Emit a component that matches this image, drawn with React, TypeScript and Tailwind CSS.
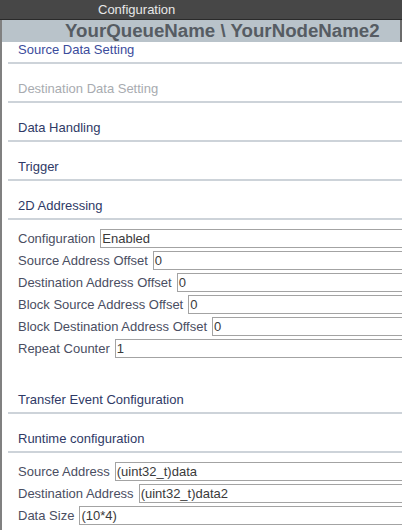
import React from 'react';

type Field = { label: string; value: string };

const addressing: Field[] = [
  { label: 'Configuration', value: 'Enabled' },
  { label: 'Source Address Offset', value: '0' },
  { label: 'Destination Address Offset', value: '0' },
  { label: 'Block Source Address Offset', value: '0' },
  { label: 'Block Destination Address Offset', value: '0' },
  { label: 'Repeat Counter', value: '1' },
];

const runtime: Field[] = [
  { label: 'Source Address', value: '(uint32_t)data' },
  { label: 'Destination Address', value: '(uint32_t)data2' },
  { label: 'Data Size', value: '(10*4)' },
];

function Section({
  title,
  tone = 'text-[#2f3a66]',
  first = false,
}: {
  title: string;
  tone?: string;
  first?: boolean;
}) {
  return (
    <div>
      <div className={`${first ? 'h-[20px]' : 'h-[37px]'} flex items-end pb-[5px] pl-[16px]`}>
        <span className={`text-[13px] leading-[15px] ${tone}`}>{title}</span>
      </div>
      <div className="ml-[6px] h-[2px] bg-[#cdd3d9]" />
    </div>
  );
}

function Fields({ items }: { items: Field[] }) {
  return (
    <div className="mt-[9px] flex w-[560px] flex-col gap-[3px] pl-[16px]">
      {items.map((f) => (
        <div key={f.label} className="flex items-center gap-[5px]">
          <span className="whitespace-nowrap text-[13px] leading-[15px] text-[#4a4e62]">{f.label}</span>
          <div className="flex h-[19px] flex-1 items-center border border-[#a3a3a3] bg-white px-[1px]">
            <span className="text-[13px] leading-[15px] text-[#3a3a3a]">{f.value}</span>
          </div>
        </div>
      ))}
    </div>
  );
}

export default function App() {
  return (
    <div
      className="h-[530px] w-[402px] overflow-hidden bg-white"
      style={{ fontFamily: '"Liberation Sans", Arial, sans-serif' }}
    >
      {/* Window title bar */}
      <div className="h-[20px] border-b border-[#2a2a2a] bg-[#474747] pl-[98px] text-[13px] leading-[19px] text-[#e8e8e8]">
        Configuration
      </div>

      <div className="h-[510px] overflow-hidden border-l-2 border-[#808080]">
        <div className="h-[22px] whitespace-nowrap border-r-2 border-[#6b6b6b] bg-[#b9c3ca] pl-[63px] text-[18.7px] font-bold leading-[22px] text-[#565c63]">
          YourQueueName \ YourNodeName2
        </div>

        <Section title="Source Data Setting" tone="text-[#3b4c9c]" first />
        <Section title="Destination Data Setting" tone="text-[#a8abb0]" />
        <Section title="Data Handling" />
        <Section title="Trigger" />
        <Section title="2D Addressing" />
        <Fields items={addressing} />

        <div className="h-[17px]" />
        <Section title="Transfer Event Configuration" />
        <Section title="Runtime configuration" />
        <Fields items={runtime} />
      </div>
    </div>
  );
}
